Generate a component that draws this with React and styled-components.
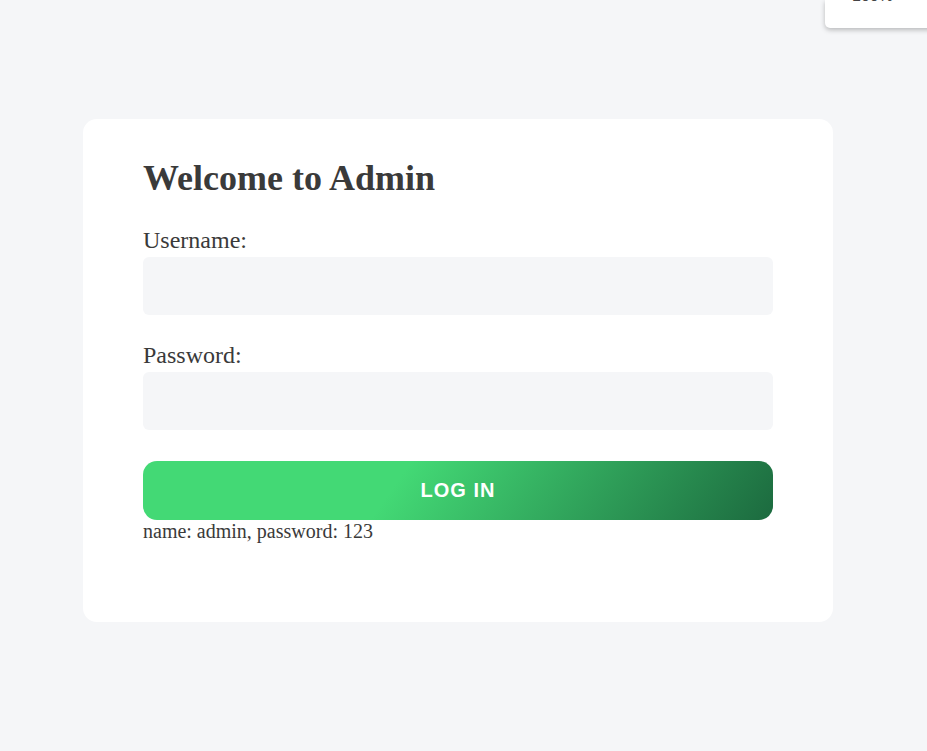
import React from 'react';
import styled, { createGlobalStyle } from 'styled-components';

const GlobalStyle = createGlobalStyle`
  html, body {
    margin: 0;
    padding: 0;
    background: #f5f6f8;
  }
  body {
    font-family: "Liberation Serif", "Times New Roman", serif;
    color: #3a3a3a;
  }
`;

const Page = styled.div`
  min-height: 751px;
  padding: 119px 0 0 83px;
  box-sizing: border-box;
  position: relative;
  overflow: hidden;
`;

const ZoomBadge = styled.div`
  position: absolute;
  top: 0;
  left: 825px;
  width: 140px;
  height: 28px;
  background: #fff;
  border-bottom-left-radius: 5px;
  box-shadow: 0 2px 5px rgba(0, 0, 0, 0.25);
  font-family: "Liberation Sans", Arial, sans-serif;
  font-size: 16px;
  line-height: 18px;
  color: #444;
  padding-left: 27px;
  box-sizing: border-box;

  span {
    display: block;
    margin-top: -13px;
  }
`;

const Card = styled.div`
  width: 750px;
  height: 503px;
  box-sizing: border-box;
  background: #fff;
  border-radius: 14px;
  padding: 39px 60px 0;
  display: flex;
  flex-direction: column;
`;

const Title = styled.h1`
  margin: 0 0 28px;
  font-size: 36px;
  font-weight: bold;
  line-height: 41px;
  color: #3a3a3a;
`;

const Label = styled.label`
  display: block;
  font-size: 24px;
  line-height: 27px;
  margin-bottom: 3px;
`;

const Input = styled.input`
  display: block;
  width: 100%;
  height: 58px;
  box-sizing: border-box;
  border: none;
  outline: none;
  border-radius: 6px;
  background: #f5f6f8;
  padding: 0 16px;
  font-size: 18px;
  margin-bottom: ${p => p.$gap}px;
`;

const Button = styled.button`
  width: 100%;
  height: 59px;
  flex: none;
  border: none;
  border-radius: 14px;
  background: linear-gradient(125deg, #43d975 40%, #1c6a3f 100%);
  color: #fff;
  font-family: "Liberation Sans", Arial, sans-serif;
  font-weight: bold;
  font-size: 20px;
  letter-spacing: 1px;
  cursor: pointer;
`;

const Hint = styled.p`
  margin: 0;
  font-size: 20px;
  line-height: 23px;
`;

export default function App() {
  return (
    <>
      <GlobalStyle />
      <Page>
        <ZoomBadge><span>100%</span></ZoomBadge>
        <Card>
          <Title>Welcome to Admin</Title>
          <Label htmlFor="username">Username:</Label>
          <Input id="username" type="text" $gap={27} />
          <Label htmlFor="password">Password:</Label>
          <Input id="password" type="password" $gap={31} />
          <Button type="button">LOG IN</Button>
          <Hint>name: admin, password: 123</Hint>
        </Card>
      </Page>
    </>
  );
}
